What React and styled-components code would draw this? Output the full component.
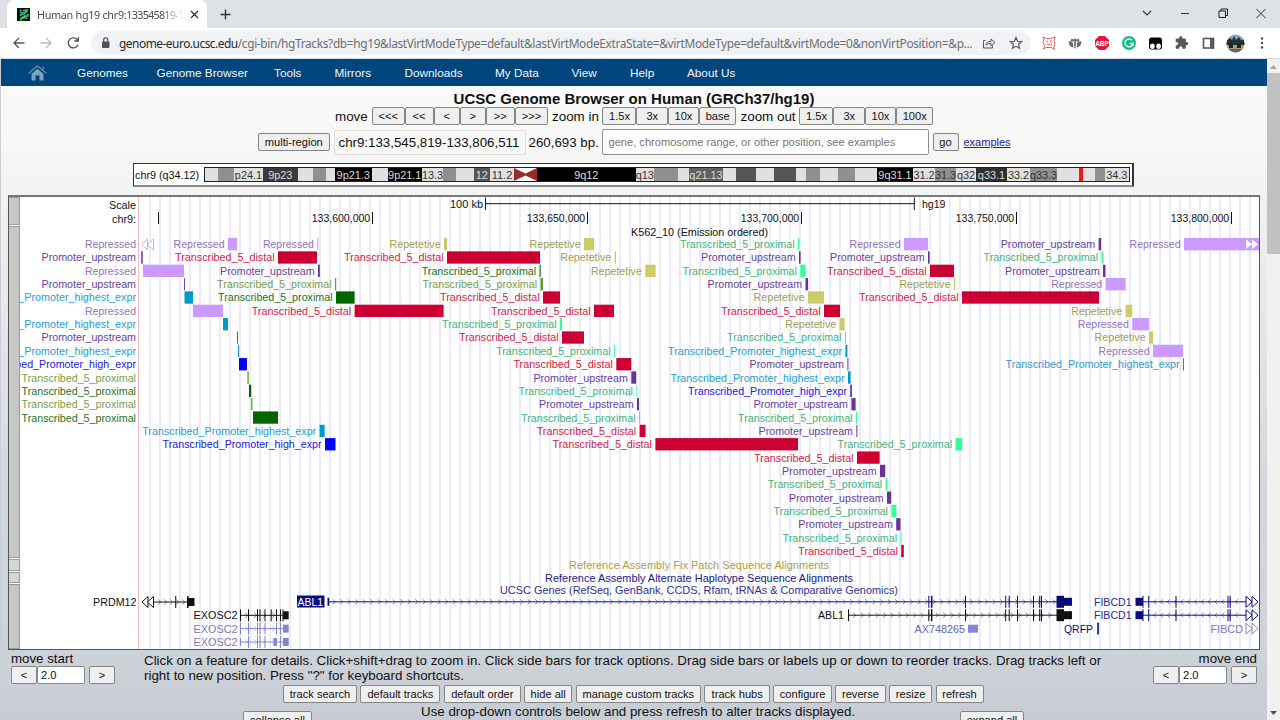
import React from "react";
import styled, { createGlobalStyle } from "styled-components";

const Global = createGlobalStyle`
  * { box-sizing: border-box; }
  html, body { margin: 0; padding: 0; overflow: hidden; }
  body { font-family: "Liberation Sans", Arial, sans-serif; color: #111; }
`;

const Window = styled.div`
  width: 1280px; height: 720px; overflow: hidden;
  display: flex; flex-direction: column; background: #fff;
`;

/* ---------- browser chrome ---------- */
const TabStrip = styled.header`
  height: 28px; flex: none; background: #dee1e6;
  display: flex; align-items: stretch; padding-left: 7px;
`;
const Tab = styled.div`
  width: 200px; background: #fff; border-radius: 7px 7px 0 0;
  display: flex; align-items: center; padding: 0 8px 0 10px;
`;
const TabTitle = styled.span`
  width: 147px; margin-left: 7px; margin-right: 6px; white-space: nowrap;
  font: 10.8px "Noto Sans", sans-serif; letter-spacing: -0.3px; color: #45494d;
  mask-image: linear-gradient(90deg, #000 84%, transparent 100%);
`;
const TabDigits = styled.span`letter-spacing: -0.75px;`;
const NewTab = styled.div`
  width: 36px; display: flex; align-items: center; justify-content: center;
`;
const WindowButtons = styled.div`
  margin-left: auto; display: flex; align-items: center; gap: 24px; padding: 0 12px 3px 0;
`;
const Toolbar = styled.div`
  height: 31px; flex: none; background: #fff; border-bottom: 1px solid #cfdae5;
  display: flex; align-items: center; padding: 0 0 0 12px;
`;
const NavIcons = styled.div`
  display: flex; gap: 13px; width: 79px;
`;
const Address = styled.div`
  width: 940px; height: 24px; border-radius: 12px; background: #f0f2f4;
  display: flex; align-items: center; padding: 0 8px 0 9px;
`;
const Url = styled.span`
  width: 863px; margin-left: 8px; white-space: nowrap;
  font: 11.9px "Noto Sans", sans-serif; color: #6a6e73; letter-spacing: -0.35px;
  b { font-weight: 400; color: #27292c; letter-spacing: -0.48px; }
`;
const AddressIcons = styled.div`display: flex; gap: 13px; align-items: center;`;
const Extensions = styled.div`
  display: flex; align-items: center; margin-left: 10px; gap: 9px;
  svg { flex: none; }
`;

/* ---------- page ---------- */
const Viewport = styled.div`flex: 1; min-height: 0; display: flex; padding-left: 1px; background: #c9ced6;`;
const Page = styled.main`
  width: 1266px; overflow: hidden; display: flex; flex-direction: column;
  background: linear-gradient(180deg, #fafaf8 0, #f8f8f6 85px, #f0f1f1 150px, #d3d7dd 430px, #cdd1d8 600px, #c7ccd4 661px);
`;
const ScrollTrack = styled.div`
  width: 13px; background: #f1f1f1; display: flex; flex-direction: column; align-items: center;
`;
const ScrollThumb = styled.div`width: 13px; height: 181px; background: #c1c1c1;`;
const ScrollEnd = styled.div`
  height: 14px; display: flex; align-items: center; margin-top: ${(p) => (p.$last ? "auto" : "0")};
`;
const Menu = styled.nav`
  height: 27px; flex: none; background: #00457c; display: flex; align-items: center;
  padding-left: 26px; color: #f2f6fa; font-size: 11.75px;
`;
const MenuHome = styled.span`width: 50px; height: 18px;`;
const MenuItem = styled.span`width: ${(p) => p.$w}px; padding-bottom: 1px; white-space: nowrap;`;

const Title = styled.h1`
  margin: 4px 0 0; height: 17px; line-height: 17px; text-align: center; font-size: 15px; flex: none;
`;
const ZoomRow = styled.div`
  height: 18px; flex: none; display: flex; align-items: center; padding-left: 334px; font-size: 13.4px;
`;
const RowLabel = styled.span`width: ${(p) => p.$w}px; padding-left: ${(p) => p.$pad || 0}px; white-space: nowrap;`;
const Button = styled.button`
  width: ${(p) => p.$w}px; height: 18px; flex: none; padding: 0; margin: 0;
  border: 1px solid #858585; border-radius: 2px; background: #efefef; color: #111;
  font: 11.1px/14px "Liberation Sans", Arial, sans-serif; white-space: nowrap;
`;
const PositionRow = styled.div`
  height: 33px; flex: none; display: flex; align-items: center; padding: 1px 0 0 257px; font-size: 13.3px;
`;
const Position = styled.div`
  width: 192px; height: 25px; margin-left: 4px; border: 1px solid #dededc;
  display: flex; align-items: center; padding-left: 4px; white-space: nowrap;
`;
const Search = styled.div`
  width: 327px; height: 26px; margin-right: 4px; border: 1px solid #8f8f8f; border-radius: 2px; background: #fff;
  display: flex; align-items: center; padding-left: 6px; font-size: 11.1px; color: #757575; white-space: nowrap;
`;
const Example = styled.a`margin-left: 5px; font-size: 11px; color: #22229c; text-decoration: underline;`;

const Ideogram = styled.div`
  width: 1001px; height: 24px; margin: 5px 0 0 132px; flex: none; background: #fff;
  border: 1px solid #333; border-bottom: 2px solid #8b8b8b; border-right-width: 2px;
  display: flex; align-items: center; font-size: 10.9px;
`;
const IdeoLabel = styled.span`width: 70px; padding-left: 1px; white-space: nowrap; font-size: 10.8px;`;
const Bands = styled.div`
  display: flex; height: 15px; border: 1px solid #222;
`;
const Band = styled.span`
  width: ${(p) => p.$w}px; background: ${(p) => p.$bg}; color: ${(p) => p.$fg}; height: 13px;
  line-height: 14px; display: flex; justify-content: center; white-space: nowrap; flex: none;
`;

const ChartFrame = styled.section`
  margin: 8px 0 0 7px; width: 1252px; height: 455px; flex: none; background: #fff;
  border: 1px solid #555; border-top: 2px solid #777; display: flex;
`;
const SideBars = styled.div`width: 11px; display: flex; flex-direction: column; gap: 1px;`;
const SideBar = styled.div`
  height: ${(p) => p.$h}px; background: ${(p) => p.$bg || "#c6c6c6"}; border: 1px solid #999; border-left: 0;
`;

const Foot = styled.footer`display: flex; flex: none; height: 34px; padding: 2px 0 0 10px; font-size: 13.34px;`;
const MoveBox = styled.div`width: ${(p) => p.$w}px; display: flex; flex-direction: column; align-items: ${(p) => p.$align};`;
const MoveText = styled.div`line-height: 14px; height: 14px; font-size: 13.3px; white-space: nowrap;`;
const MoveControls = styled.div`display: flex;`;
const MoveInput = styled.div`
  width: 48px; height: 18px; margin-right: 4px; border: 1px solid #8a8a8a; border-radius: 2px; background: #fff;
  font-size: 11.2px; line-height: 16px; padding-left: 3px;
`;
const Help = styled.p`
  margin: 0; width: 1009px; line-height: 15px; padding-top: 1px; white-space: nowrap;
`;
const Actions = styled.div`display: flex; gap: 3.4px; flex: none; padding-left: 282px; height: 18px; margin-top: 1px;`;
const Last = styled.div`display: flex; flex: none; padding-left: 242px; margin-top: 2px; font-size: 13.34px;`;
const LastText = styled.span`width: 648px; padding: 0 0 0 109px; line-height: 14px; white-space: nowrap;`;
const Drop = styled.div`padding-top: 6px;`;

/* ---------- data ---------- */
const MENU = [["Genomes", 79.5], ["Genome Browser", 117.5], ["Tools", 60.5], ["Mirrors", 70], ["Downloads", 90.5],
  ["My Data", 76.5], ["View", 58.5], ["Help", 57], ["About Us", 60]];

const L = "#e0e0e0", G = "#909090", D = "#555", K = "#000";
const BANDS = [
  [13, L], [16, G], [29, L, "p24.1"], [34.5, "#3c3c3c", "9p23"], [15.5, L], [13, G], [9, L], [36.5, K, "9p21.3"],
  [16, L], [34.5, K, "9p21.1"], [21, L, "13.3"], [13, G], [17.5, L], [16.5, D, "12"], [24, L, "11.2"], [23, "cen"],
  [98.5, K, "9q12"], [18.5, L, "q13"], [23.5, G], [11.5, L], [34, "#606060", "q21.13"], [13, L], [20, D], [18, L],
  [22, D], [10, L], [14, G], [18, L], [17, G], [22, L], [36, K, "9q31.1"], [22, L, "31.2"], [21, G, "31.3"],
  [20, L, "q32"], [31, "#303030", "q33.1"], [23, L, "33.2"], [27, G, "q33.3"], [21.5, L], [4, "#f01818"],
  [12.5, L], [10, G], [23.5, L, "34.3"],
];

const KIND = {
  R: ["Repressed", 51, "#cc99ff", "#9573b8"],
  P: ["Promoter_upstream", 94.5, "#663399", "#6a3f9c"],
  D: ["Transcribed_5_distal", 99.5, "#cc0033", "#cc1f48"],
  Y: ["Repetetive", 51, "#cccc66", "#a0a050"],
  M: ["Transcribed_5_proximal", 114.5, "#33ff99", "#3fb47e"],
  O: ["Transcribed_5_proximal", 114.5, "#669933", "#76a04a"],
  G: ["Transcribed_5_proximal", 114.5, "#006600", "#1c7426"],
  H: ["Transcribed_Promoter_highest_expr", 174, "#0099cc", "#2a9ecb"],
  B: ["Transcribed_Promoter_high_expr", 159, "#0000ff", "#2020e0"],
};
const ROWS = [
  [["R", 228, 9], ["R", 317.3, 1], ["Y", 444, 3], ["Y", 584, 10], ["M", 798, 1], ["R", 904, 24], ["P", 1098.6, 2.6], ["R", 1184, 75]],
  [["P", 141.2, 1.5, 136], ["D", 278, 39], ["D", 447, 93], ["Y", 614.6, 1.5], ["P", 799, 1.6], ["P", 928, 1.6], ["M", 1101.5, 1.7]],
  [["R", 143, 41, 136], ["P", 318, 1.8], ["G", 539.6, 1], ["Y", 645.3, 10.4], ["M", 800.3, 5.2], ["D", 930, 24], ["P", 1103, 2.5]],
  [["P", 184, 0.9, 136], ["O", 335, 1.2], ["O", 540.5, 2.5], ["P", 805.5, 2.6], ["Y", 953.8, 1.5], ["R", 1105.6, 20]],
  [["H", 184.5, 8.5, 136], ["G", 336, 18.6], ["D", 543, 17], ["Y", 808, 16], ["D", 962, 137]],
  [["R", 193, 30, 136], ["D", 354.6, 89], ["D", 594, 20], ["D", 824, 16], ["Y", 1125.6, 6.6]],
  [["H", 223, 5, 136], ["M", 560, 2], ["Y", 839.6, 5], ["R", 1132.2, 16.8]],
  [["P", 237, 0.9, 136], ["D", 562, 22], ["M", 845, 1], ["Y", 1149, 4]],
  [["H", 238, 1, 136], ["M", 614, 0.9], ["H", 845.4, 2], ["R", 1153, 30]],
  [["B", 239, 8, 136], ["D", 616.3, 15], ["P", 847.4, 1], ["H", 1183, 1]],
  [["O", 247.4, 1.3, 136], ["P", 631.3, 5], ["H", 848, 2.6]],
  [["G", 249, 2.2, 136], ["M", 636.4, 1], ["B", 850.4, 1.3]],
  [["O", 251.2, 1.3, 136], ["P", 637, 2], ["P", 851.4, 4.2]],
  [["G", 253, 25, 136], ["M", 639, 1], ["M", 856, 1]],
  [["H", 319.6, 5], ["D", 639.6, 6], ["P", 856.4, 1]],
  [["B", 325, 10.5], ["D", 655.4, 142.6], ["M", 955.5, 6.7]],
  [["D", 857, 22.6]], [["P", 880, 5.2]], [["M", 885.6, 1.8]], [["P", 887, 4.2]], [["M", 891.4, 5]],
  [["P", 896.2, 4.3]], [["M", 900.5, 1]], [["D", 901.2, 2.6]],
];

function Txt({ x, y, w, end, fill = "#111", size = 11.6, children }) {
  return (
    <text x={x} y={y} fontSize={size} fill={fill} textAnchor={end ? "end" : "start"} textLength={w} lengthAdjust="spacingAndGlyphs">
      {children}
    </text>
  );
}

function Gene({ x1, x2, y, color, exons = [], blocks = [], dir = 1, step = 9, from = 6 }) {
  let chevrons = "";
  for (let x = x1 + from; x < x2 - 3; x += step) chevrons += `M${x - dir * 1.3} ${y - 2.5}l${dir * 2.6} 2.5l${-dir * 2.6} 2.5`;
  return (
    <g>
      <path d={`M${x1} ${y}H${x2}`} stroke={color} strokeWidth="1" />
      <path d={chevrons} stroke={color} strokeWidth=".7" fill="none" opacity=".7" />
      {exons.map(([x, w = 1]) => <rect key={x} x={x} y={y - 6} width={w} height="12" fill={color} />)}
      {blocks.map(([x, w, h]) => <rect key={x} x={x} y={y - h / 2} width={w} height={h} fill={color} />)}
    </g>
  );
}

function Tri({ x, y, color, dir = 1, fill = "none", s = 5.5 }) {
  return <path d={`M${x} ${y - s}L${x + dir * 6} ${y}L${x} ${y + s}Z`} fill={fill} stroke={color} strokeWidth="1" />;
}

const NAVY = "#0c0c78", SOFT = "#8484d0";
const ABL = [[931, 1.4], [965, 1], [1005.2], [1008.7], [1017], [1033], [1039.2, 1], [1041]];

function TrackChart() {
  return (
    <svg width="1239" height="452" viewBox="20 197 1239 452" fontFamily="Liberation Sans, Arial, sans-serif">
      {Array.from({ length: 111 }, (_, i) => <rect key={i} x={149 + i * 10} y="197" width="2" height="452" fill="#ebebfa" />)}
      <rect x="138" y="197" width="1" height="452" fill="#f3b9bd" />
      <Txt x={136} y={209} w={27} end>Scale</Txt>
      <Txt x={136} y={223} w={24} end>chr9:</Txt>
      <rect x="158" y="212" width="1" height="12" fill="#111" />
      {[[372, "133,600,000"], [587, "133,650,000"], [801, "133,700,000"], [1016, "133,750,000"], [1231, "133,800,000"]].map(([x, t]) => (
        <g key={t}>
          <Txt x={x - 1.8} y={222.4} w={58.5} end>{t}</Txt>
          <rect x={x} y="212" width="1" height="12" fill="#111" />
        </g>
      ))}
      <Txt x={483} y={208} w={33} end>100 kb</Txt>
      <path d="M485.5 197.5V210M485.5 203.7H914M914.3 197.5V210" stroke="#111" fill="none" />
      <Txt x={922} y={208} w={23.5}>hg19</Txt>
      <Txt x={631} y={236.4} w={137}>K562_10 (Emission ordered)</Txt>
      <Txt x={136} y={248.3} w={51} end fill="#9573b8">Repressed</Txt>
      <path d="M147.5 239l-6 5.5l6 5.5zM153.5 239l-6 5.5l6 5.5z" fill="#fff" stroke="#cc99ff" strokeWidth=".9" />
      {ROWS.map((row, r) => row.map(([k, x, w, end]) => {
        const [label, len, bar, ink] = KIND[k];
        return (
          <g key={k + x}>
            <rect x={x} y={238 + r * 13.34} width={w} height="12.3" fill={bar} />
            <Txt x={end || x - 3.4} y={248.1 + r * 13.34} w={len} end fill={ink}>{label}</Txt>
          </g>
        );
      }))}
      <path d="M1246 239.5l6 4.8l-6 4.8zM1252 239.5l6 4.8l-6 4.8z" fill="#fff" />
      <Txt x={569} y={569.4} w={260} fill="#b0a044">Reference Assembly Fix Patch Sequence Alignments</Txt>
      <Txt x={545} y={582} w={308} fill="#22227c">Reference Assembly Alternate Haplotype Sequence Alignments</Txt>
      <Txt x={500} y={594.4} w={398} fill="#33338c">UCSC Genes (RefSeq, GenBank, CCDS, Rfam, tRNAs &amp; Comparative Genomics)</Txt>

      <Txt x={136.5} y={606} w={43.5} end>PRDM12</Txt>
      <Tri x={148} y={602} color="#111" dir={-1} fill="#fff" />
      <Tri x={153.5} y={602} color="#111" dir={-1} fill="#fff" />
      <Gene x1={153.5} x2={187} y={602} color="#111" exons={[[175.2], [187, 1.5]]} blocks={[[188, 6.5, 8]]} step={6} />
      <Txt x={237.5} y={619.4} w={44} end>EXOSC2</Txt>
      <Gene x1={240.5} x2={284} y={615.3} color="#111" exons={[[240], [248], [257], [259.5], [264.5], [270.7], [276], [280], [282.5]]} blocks={[[283, 5.7, 8]]} />
      <Txt x={237.5} y={632.8} w={44} end fill="#7a7ab8">EXOSC2</Txt>
      <Gene x1={240.5} x2={284} y={628.6} color={SOFT} exons={[[240], [248], [257], [259.5], [264.5], [276], [280]]} blocks={[[283, 5.7, 8]]} />
      <Txt x={237.5} y={646} w={44} end fill="#7a7ab8">EXOSC2</Txt>
      <Gene x1={240.5} x2={284} y={642} color={SOFT} exons={[[248], [257], [259.5], [264.5], [280]]} blocks={[[240, 1, 8], [273.5, 3.5, 8], [283, 5.7, 8]]} />

      <rect x="297" y="595.5" width="27.5" height="12" fill={NAVY} />
      <Txt x={323} y={605.8} w={25.5} end fill="#fff">ABL1</Txt>
      <Gene x1={328} x2={1058} y={601.8} color={NAVY} exons={[[928.3], ...ABL]} blocks={[[327.5, 1.7, 8], [1056.5, 7.5, 12], [1063, 9, 8]]} step={7.5} />
      <Txt x={844} y={619.4} w={26} end>ABL1</Txt>
      <Gene x1={848.5} x2={1058} y={615.2} color="#111" exons={[[848], [928.3], ...ABL]} blocks={[[1056.5, 7.5, 12], [1063, 9, 8]]} step={7.5} />
      <Txt x={965} y={633} w={50.5} end fill="#6868b0">AX748265</Txt>
      <rect x="968" y="624.7" width="10" height="8" fill="#8686d8" />
      <Txt x={1093} y={633} w={29} end fill={NAVY}>QRFP</Txt>
      <rect x="1097.2" y="622.5" width="1.6" height="12" fill={NAVY} />
      {[601.8, 615.2].map((y) => (
        <g key={y}>
          <Txt x={1131.5} y={y + 4.2} w={37.5} end fill="#2a2a88">FIBCD1</Txt>
          <Gene x1={1143} x2={1246} y={y} color={NAVY} dir={-1} exons={[[1142.5], [1148.2], [1175.5], [1227.5], [1229.7]]} blocks={[[1135.5, 7.5, 8]]} step={6.8} from={12} />
          <Tri x={1246} y={y} color={NAVY} fill="#fff" />
          <Tri x={1252} y={y} color={NAVY} fill="#fff" />
        </g>
      ))}
      <Txt x={1243} y={632.8} w={32.5} end fill="#7a7ab8">FIBCD</Txt>
      <Tri x={1246} y={628.6} color={SOFT} fill="#fff" />
      <Tri x={1252} y={628.6} color={SOFT} fill="#fff" />
    </svg>
  );
}

/* ---------- icons ---------- */
const Line = ({ w = 14, h = w, box = "0 0 14 14", d, c = "#54585d", sw = 1.4 }) => (
  <svg width={w} height={h} viewBox={box} fill="none" stroke={c} strokeWidth={sw}><path d={d} /></svg>
);
const Favicon = () => (
  <svg width="13" height="13" viewBox="0 0 13 13">
    <rect width="13" height="13" fill="#06120c" />
    <path d="M9.500 1Q11 3 8 4.500Q3 6 4 8M11 6Q11 9 7 9.500Q3 10 4 12.500" stroke="#27c66b" strokeWidth="2" fill="none" />
    <path d="M4 1.500Q2.500 4 5 5.500Q10 7.500 9 11" stroke="#2a93a8" strokeWidth="1.700" fill="none" />
    <path d="M6 2.500L9 2M5 9.500L8 8.500" stroke="#c5df4a" strokeWidth="1" />
  </svg>
);

function ExtensionIcons() {
  return (
    <Extensions>
      <svg width="16" height="16" viewBox="0 0 16 16" fill="none" stroke="#dc625c" strokeWidth="1">
        <path d="M3 4L2 2L5.500 3.500H9.500L14 2L13.200 5.500L14 9L12.500 13L14 14.500L10 12.500H5L2.500 14L3.500 10.500L2 7ZM5.500 6.500L7 5.500M9 5.500L11 6.500M5.500 9Q6.500 11 8 9.500Q10 11 11 9M6.700 7.300V8.200M9.700 7.300V8.200" />
      </svg>
      <svg width="18" height="16" viewBox="0 0 18 16" fill="#686c70">
        <path d="M8 4Q9 2.500 10 4L9.700 12.500L9 14L8.300 12.500ZM2.500 6.500Q5.500 5.500 7.200 8.500V12.500Q3 12 2.500 6.500M15.500 6.500Q12.500 5.500 10.800 8.500V12.500Q15 12 15.500 6.500" />
        <circle cx="6.300" cy="5.200" r="1.500" /><circle cx="11.700" cy="5.200" r="1.500" />
      </svg>
      <svg width="18" height="18" viewBox="0 0 18 18">
        <path d="M6 2H12L16 6V12L12 16H6L2 12V6Z" fill="#e0183f" />
        <text x="9" y="11.500" fontSize="6.500" fontWeight="700" fill="#fff" textAnchor="middle" fontFamily="Liberation Sans, sans-serif">ABP</text>
      </svg>
      <svg width="18" height="18" viewBox="0 0 18 18">
        <circle cx="9" cy="9" r="7" fill="#15b98c" />
        <path d="M12 6.200A4 4 0 1 0 13 9.500H9.800M13 9.500V12" fill="none" stroke="#fff" strokeWidth="1.300" />
      </svg>
      <svg width="17" height="17" viewBox="0 0 17 17">
        <path d="M4.500 2.500H12.500Q15 2.500 15 5V12.500Q15 14.500 12.500 14.500H4.500Q2 14.500 2 12.500V5Q2 2.500 4.500 2.500" fill="#050505" />
        <ellipse cx="5.400" cy="11.200" rx="2.300" ry="2.700" fill="#fff" /><ellipse cx="11.600" cy="11.200" rx="2.300" ry="2.700" fill="#fff" />
      </svg>
      <svg width="18" height="18" viewBox="0 0 24 24" fill="#55595e">
        <path d="M20.500 11H19V7a2 2 0 0 0-2-2h-4V3.500a2.500 2.500 0 0 0-5 0V5H4a2 2 0 0 0-2 2v3.800h1.500a2.700 2.700 0 0 1 0 5.400H2V20a2 2 0 0 0 2 2h3.800v-1.500a2.700 2.700 0 0 1 5.400 0V22H17a2 2 0 0 0 2-2v-4h1.500a2.500 2.500 0 0 0 0-5z" transform="translate(2 2) scale(.8)" />
      </svg>
      <svg width="17" height="16" viewBox="0 0 17 16">
        <rect x="3.500" y="3.500" width="10" height="9.500" fill="#fff" stroke="#55595e" strokeWidth="1.600" />
        <rect x="10" y="3" width="4" height="10.500" fill="#55595e" />
      </svg>
      <svg width="19" height="19" viewBox="0 0 19 19">
        <clipPath id="avatar"><circle cx="9.500" cy="9.500" r="9" /></clipPath>
        <g clipPath="url(#avatar)">
          <rect width="19" height="19" fill="#7fa6c9" />
          <path d="M0 7L4 4L6 6L8 2L10 6L13 3L15 6L19 5V12H0Z" fill="#26302f" />
          <rect y="11" width="19" height="4" fill="#b39a77" /><path d="M3 9H7V14H3ZM11 9H15V14H11Z" fill="#1e2628" />
          <rect y="15" width="19" height="4" fill="#6b655d" />
        </g>
      </svg>
      <svg width="14" height="16" viewBox="0 0 14 16" fill="#4a4e52">
        <circle cx="8" cy="3.500" r="1.200" /><circle cx="8" cy="8" r="1.200" /><circle cx="8" cy="12.500" r="1.200" />
      </svg>
    </Extensions>
  );
}

const Buttons = ({ items }) => items.map(([t, w]) => <Button key={t} $w={w}>{t}</Button>);

export default function App() {
  return (
    <Window>
      <Global />
      <TabStrip>
        <Tab>
          <Favicon />
          <TabTitle>Human hg19 chr9:<TabDigits>133545819-13</TabDigits></TabTitle>
          <Line w={9} box="0 0 9 9" d="M1 1L8 8M8 1L1 8" c="#333" sw={1.3} />
        </Tab>
        <NewTab><Line w={11} box="0 0 11 11" d="M5.500 .5V10.500M.5 5.500H10.500" c="#333" sw={1.4} /></NewTab>
        <WindowButtons>
          <Line d="M3 5L7 9L11 5" c="#333" sw={1.1} />
          <Line d="M3 7.500H11" c="#333" sw={1} />
          <Line d="M3 5H9.500V11.500H3ZM5 5V3H11.500V9.500H9.500" c="#222" sw={1} />
          <Line d="M2.500 3L11.500 12M11.500 3L2.500 12" c="#333" sw={1} />
        </WindowButtons>
      </TabStrip>
      <Toolbar>
        <NavIcons>
          <Line d="M12.500 7H2M7 2L2 7L7 12" />
          <Line d="M1.500 7H12M7 2L12 7L7 12" c="#b9bcc0" />
          <Line d="M11.500 4.200A5 5 0 1 0 12 8.500M12.300 1V5H8.300" />
        </NavIcons>
        <Address>
          <svg width="11" height="12" viewBox="0 0 11 12"><rect x="2" y="4.500" width="7.500" height="6.500" rx=".8" fill="#4d5156" /><path d="M3.700 5V3A2 2 0 0 1 7.800 3V5" fill="none" stroke="#4d5156" strokeWidth="1.200" /></svg>
          <Url><b>genome-euro.ucsc.edu</b>/cgi-bin/hgTracks?db=hg19&amp;lastVirtModeType=default&amp;lastVirtModeExtraState=&amp;virtModeType=default&amp;virtMode=0&amp;nonVirtPosition=&amp;p...</Url>
          <AddressIcons>
            <Line d="M3.500 4.500H1.500V12H10.500V9.500M4 9Q4 5.500 9 5.500V3L13 6.500L9 10V7.500Q5.500 7.500 4 9Z" sw={1} />
            <Line d="M7 1.500L8.600 5.300L12.700 5.600L9.600 8.300L10.500 12.300L7 10.100L3.500 12.300L4.400 8.300L1.300 5.600L5.400 5.300Z" sw={1.2} />
          </AddressIcons>
        </Address>
        <ExtensionIcons />
      </Toolbar>
      <Viewport>
        <Page>
          <Menu>
            <MenuHome>
              <svg width="21" height="18" viewBox="0 0 21 18" fill="#7fa2bd">
                <path d="M4.500 10L10.500 4.800L16.500 10V16.500H12.500V11.500H8.500V16.500H4.500Z" />
                <path d="M1.500 9.500L10.500 2L19.500 9.500M16 2.500V6" fill="none" stroke="#5d89ab" strokeWidth="1.500" />
              </svg>
            </MenuHome>
            {MENU.map(([t, w]) => <MenuItem key={t} $w={w}>{t}</MenuItem>)}
          </Menu>
          <Title>UCSC Genome Browser on Human (GRCh37/hg19)</Title>
          <ZoomRow>
            <RowLabel $w={37}>move</RowLabel>
            <Buttons items={[["<<<", 32.5], ["<<", 29.2], ["<", 26], [">", 26], [">>", 29.3], [">>>", 33]]} />
            <RowLabel $w={54.5} $pad={4}>zoom in</RowLabel>
            <Buttons items={[["1.5x", 34], ["3x", 31.5], ["10x", 31], ["base", 37.5]]} />
            <RowLabel $w={63} $pad={4}>zoom out</RowLabel>
            <Buttons items={[["1.5x", 34], ["3x", 31.5], ["10x", 31], ["100x", 37.5]]} />
          </ZoomRow>
          <PositionRow>
            <Button $w={71.5}>multi-region</Button>
            <Position>chr9:133,545,819-133,806,511</Position>
            <RowLabel $w={76} $pad={3}>260,693 bp.</RowLabel>
            <Search>gene, chromosome range, or other position, see examples</Search>
            <Button $w={26}>go</Button>
            <Example>examples</Example>
          </PositionRow>
          <Ideogram>
            <IdeoLabel>chr9 (q34.12)</IdeoLabel>
            <Bands>
              {BANDS.map(([w, bg, t], i) => bg === "cen" ? (
                <svg key={i} width={w} height="13" viewBox="0 0 23 13"><rect y="-1" width="23" height="15" fill="#fff" /><path d="M0 0L11.500 5.500L23 0V13L11.500 7.500L0 13Z" fill="#9c2a2a" /></svg>
              ) : (
                <Band key={i} $w={w} $bg={bg} $fg={bg === L || bg === G ? "#333" : "#ddd"}>{t}</Band>
              ))}
            </Bands>
          </Ideogram>
          <ChartFrame>
            <SideBars>
              <SideBar $h={28} /><SideBar $h={332} /><SideBar $h={12} $bg="#d6d6d6" /><SideBar $h={11} $bg="#d6d6d6" /><SideBar $h={65} />
            </SideBars>
            <TrackChart />
          </ChartFrame>
          <Foot>
            <MoveBox $w={133} $align="flex-start">
              <MoveText>move start</MoveText>
              <MoveControls><Button $w={26}>&lt;</Button><MoveInput>2.0</MoveInput><Button $w={26}>&gt;</Button></MoveControls>
            </MoveBox>
            <Help>
              Click on a feature for details. Click+shift+drag to zoom in. Click side bars for track options. Drag side bars or labels up or down to reorder tracks. Drag tracks left or<br />
              right to new position. Press "?" for keyboard shortcuts.
            </Help>
            <MoveBox $w={104} $align="flex-end">
              <MoveText>move end</MoveText>
              <MoveControls><Button $w={26}>&lt;</Button><MoveInput>2.0</MoveInput><Button $w={26}>&gt;</Button></MoveControls>
            </MoveBox>
          </Foot>
          <Actions>
            <Buttons items={[["track search", 74], ["default tracks", 80], ["default order", 77], ["hide all", 48], ["manage custom tracks", 125.5],
              ["track hubs", 65.5], ["configure", 58.5], ["reverse", 50.5], ["resize", 43], ["refresh", 48]]} />
          </Actions>
          <Last>
            <Drop><Button $w={69}>collapse all</Button></Drop>
            <LastText>Use drop-down controls below and press refresh to alter tracks displayed.</LastText>
            <Drop><Button $w={64}>expand all</Button></Drop>
          </Last>
        </Page>
        <ScrollTrack>
          <ScrollEnd><svg width="7" height="5"><path d="M0 5L3.500 1L7 5Z" fill="#a3a3a3" /></svg></ScrollEnd>
          <ScrollThumb />
          <ScrollEnd $last><svg width="7" height="5"><path d="M0 0L3.500 4L7 0Z" fill="#505050" /></svg></ScrollEnd>
        </ScrollTrack>
      </Viewport>
    </Window>
  );
}
